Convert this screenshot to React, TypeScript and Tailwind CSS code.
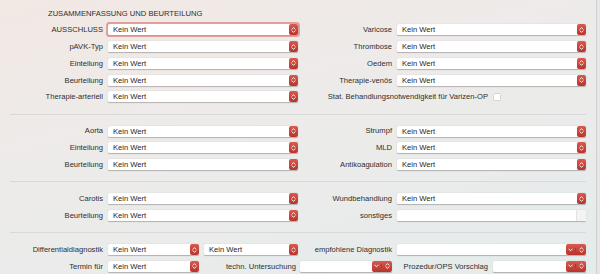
import React from 'react'

type SelectProps = {
  w: string
  value?: string
  focus?: boolean
  kind?: 'single' | 'double' | 'text'
}

function UpDown() {
  return (
    <svg width="5" height="8" viewBox="0 0 5 8" fill="none">
      <path d="M1 3.2 L2.5 1.6 L4 3.2" stroke="white" strokeWidth="0.9" strokeLinecap="round" strokeLinejoin="round" />
      <path d="M1 4.8 L2.5 6.4 L4 4.8" stroke="white" strokeWidth="0.9" strokeLinecap="round" strokeLinejoin="round" />
    </svg>
  )
}

function Down() {
  return (
    <svg width="5" height="4" viewBox="0 0 5 4" fill="none">
      <path d="M0.8 1 L2.5 2.8 L4.2 1" stroke="white" strokeWidth="0.9" strokeLinecap="round" strokeLinejoin="round" />
    </svg>
  )
}

function Select({ w, value = 'Kein Wert', focus = false, kind = 'single' }: SelectProps) {
  return (
    <div
      className={`${w} h-[11px] flex items-stretch bg-white rounded-[1.5px] shadow-[0_0.5px_1px_rgba(0,0,0,0.25)] ${
        focus ? 'outline outline-[2px] outline-[#dd8d88]/80' : ''
      }`}
    >
      <span className="flex-1 pl-[5px] text-[7.6px] leading-[11px] text-[#262626] truncate">{value}</span>
      {kind === 'single' && (
        <span className="w-[9px] rounded-[2px] bg-[linear-gradient(180deg,#d95a50,#b6342c)] flex items-center justify-center">
          <UpDown />
        </span>
      )}
      {kind === 'double' && (
        <span className="w-[20px] rounded-[2px] bg-[linear-gradient(180deg,#d95a50,#b6342c)] flex items-center">
          <span className="w-[10px] flex justify-center border-r border-[#a42c25]/60">
            <Down />
          </span>
          <span className="flex-1 flex justify-center">
            <UpDown />
          </span>
        </span>
      )}
      {kind === 'text' && <span className="w-[10px] bg-[#f3f3f3] border-l border-[#e2e2e2]" />}
    </div>
  )
}

function Row({ label, lw, sw, focus, kind }: { label: string; lw: string; sw: string; focus?: boolean; kind?: 'single' | 'double' | 'text' }) {
  return (
    <div className="h-[16.75px] flex items-center">
      <span className={`${lw} text-right text-[7.6px] text-[#2e2e2e] whitespace-nowrap`}>{label}</span>
      <span className="w-[5px]" />
      <Select w={sw} focus={focus} kind={kind} value={kind === 'text' ? '' : 'Kein Wert'} />
    </div>
  )
}

function Section({ left, right, children, first }: { left: string[]; right: string[]; children?: React.ReactNode; first?: boolean }) {
  return (
    <div className={`mx-[10px] ${first ? 'pb-[8.2px]' : 'py-[8.2px] border-t border-[#d9d9d9]'}`}>
      <div className="-mx-[10px] grid grid-cols-[298px_1fr]">
        <div className="flex flex-col">
          {left.map((l, i) => (
            <Row key={l + i} label={l} lw="w-[103px]" sw="w-[190px]" focus={first && i === 0} />
          ))}
        </div>
        <div className="flex flex-col">
          {right.map((r) => (
            <Row key={r} label={r} lw="w-[94px]" sw="w-[189px]" kind={r === 'sonstiges' ? 'text' : 'single'} />
          ))}
          {children}
        </div>
      </div>
    </div>
  )
}

export default function App() {
  return (
    <div className="relative w-[600px] h-[274px] overflow-hidden font-['Liberation_Sans',Arial,sans-serif] bg-[linear-gradient(165deg,#f2e8e4_0%,#edebea_40%,#eaebeb_70%,#e3ecec_100%)]">
      <div className="absolute right-0 top-0 bottom-0 w-[4px] border-l border-[#cfcfcf] bg-[#e6e6e6]" />
      <div className="w-[596px]">
        {/* Zusammenfassung */}
        <div className="pt-[8px]">
          <div className="pl-[48px] h-[12px] leading-[12px] text-[7.6px] text-[#2e2e2e] mb-[1.6px]">ZUSAMMENFASSUNG UND BEURTEILUNG</div>
        </div>
        <Section
          first
          left={['AUSSCHLUSS', 'pAVK-Typ', 'Einteilung', 'Beurteilung', 'Therapie-arteriell']}
          right={['Varicose', 'Thrombose', 'Oedem', 'Therapie-venös']}
        >
          <div className="h-[16.75px] flex items-center">
            <span className="w-[190px] text-right text-[7.6px] text-[#2e2e2e] whitespace-nowrap">
              Stat. Behandlungsnotwendigkeit für Varizen-OP
            </span>
            <span className="w-[5px]" />
            <span className="w-[8px] h-[8px] bg-white rounded-[1.5px] border border-[#d4d4d4]" />
          </div>
        </Section>

        <Section left={['Aorta', 'Einteilung', 'Beurteilung']} right={['Strumpf', 'MLD', 'Antikoagulation']} />

        <Section left={['Carotis', 'Beurteilung']} right={['Wundbehandlung', 'sonstiges']} />

        {/* Diagnostik */}
        <div className="mx-[10px] py-[8.2px] border-t border-[#d9d9d9]">
          <div className="-mx-[10px] flex flex-col">
            <div className="h-[16.75px] flex items-center">
              <span className="w-[103px] text-right text-[7.6px] text-[#2e2e2e] whitespace-nowrap">Differentialdiagnostik</span>
              <span className="w-[5px]" />
              <Select w="w-[91px]" />
              <span className="w-[5px]" />
              <Select w="w-[94px]" />
              <span className="w-[94px] text-right text-[7.6px] text-[#2e2e2e] whitespace-nowrap">empfohlene Diagnostik</span>
              <span className="w-[5px]" />
              <Select w="w-[189px]" value="" kind="double" />
            </div>
            <div className="h-[16.75px] flex items-center">
              <span className="w-[103px] text-right text-[7.6px] text-[#2e2e2e] whitespace-nowrap">Termin für</span>
              <span className="w-[5px]" />
              <Select w="w-[91px]" />
              <span className="w-[97px] text-right text-[7.6px] text-[#2e2e2e] whitespace-nowrap">techn. Untersuchung</span>
              <span className="w-[4px]" />
              <Select w="w-[92px]" value="" kind="double" />
              <span className="w-[96px] text-right text-[7.6px] text-[#2e2e2e] whitespace-nowrap">Prozedur/OPS Vorschlag</span>
              <span className="w-[5px]" />
              <Select w="w-[93px]" value="" kind="double" />
            </div>
          </div>
        </div>
      </div>
    </div>
  )
}
